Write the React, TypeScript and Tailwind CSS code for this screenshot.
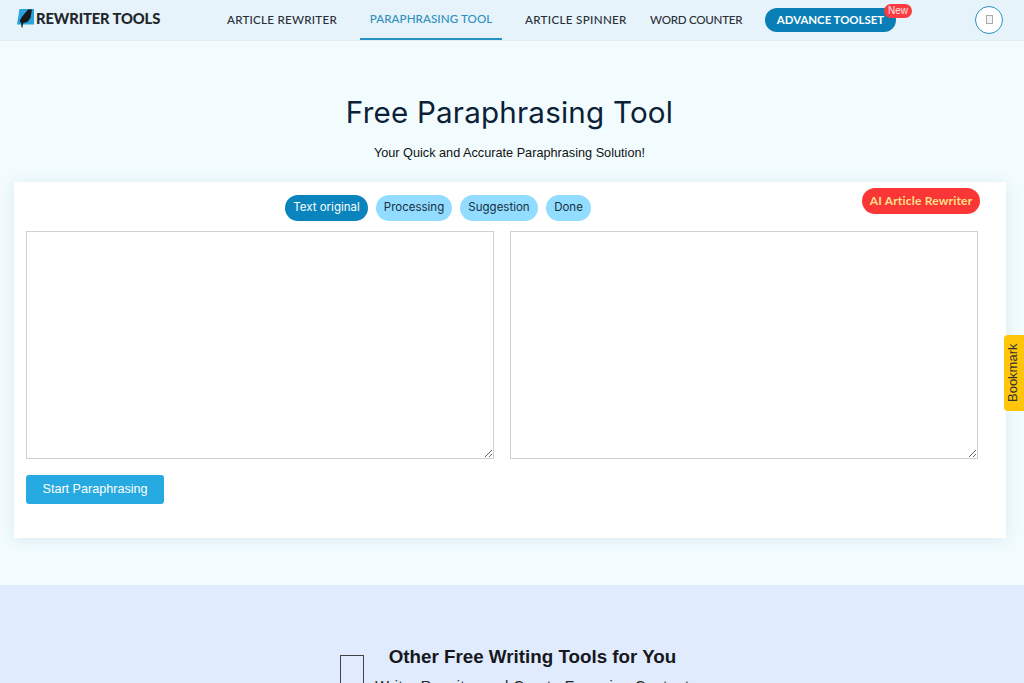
export default function App() {
  const nav = "font-['Lato',sans-serif] text-[11.6px] font-medium text-[#2a2f38] whitespace-nowrap";
  const poppins = "font-['Inter',sans-serif]";
  return (
    <div className="relative h-[683px] w-[1024px] overflow-hidden bg-[#f2fcff] font-['Liberation_Sans',sans-serif]">
      <header className="flex h-[41px] items-stretch border-b border-[#e2eef4] bg-[#e6f3fa]">
        <div className="ml-[17px] flex w-[210px] items-center gap-[1px] pb-[4px]">
          <svg width="18" height="20" viewBox="0 0 18 20" className="shrink-0">
            <path d="M2.5 1H17V16.5H0Z" fill="#29a5dd" />
            <path d="M11 1.5H15L13.5 10L10.5 14L8 14.5L6 15.5L5.5 19.5L4.5 19.5L4.2 15L2.5 13L5.5 8Z" fill="#17191c" />
          </svg>
          <span className="font-['Lato',sans-serif] text-[14.7px] font-black leading-none tracking-[-0.1px] text-[#22262b] whitespace-nowrap">REWRITER TOOLS</span>
        </div>
        <div className="flex w-[133px] items-center pb-[1px]"><span className={nav + " tracking-[0.25px]"}>ARTICLE REWRITER</span></div>
        <div className="flex w-[142px] items-center justify-center border-b-2 border-[#2492c5]">
          <span className={nav + " tracking-[0.08px] !text-[#2f8fbd]"}>PARAPHRASING TOOL</span>
        </div>
        <div className="ml-[23px] flex w-[125px] items-center pb-[1px]"><span className={nav + " tracking-[0.33px]"}>ARTICLE SPINNER</span></div>
        <div className="flex w-[115px] items-center pb-[1px]"><span className={nav + " tracking-[-0.27px]"}>WORD COUNTER</span></div>
        <div className="flex items-center pb-[1px]">
          <div className="relative flex h-[24px] w-[131px] items-center justify-center rounded-full bg-[#0a7fb7]">
            <span className="font-['Lato',sans-serif] text-[11.4px] font-bold tracking-[0px] text-white whitespace-nowrap">ADVANCE TOOLSET</span>
            <span className="absolute right-[-16px] top-[-4px] flex h-[14px] w-[28px] items-center justify-center rounded-full bg-[#fb3a41] text-[10px] leading-none text-[#ffe5e5]">New</span>
          </div>
        </div>
        <div className="ml-[79px] flex items-center pb-[1px]">
          <div className="flex h-[28px] w-[28px] items-center justify-center rounded-full border border-[#2a8fc0] bg-white">
            <span className="h-[9px] w-[7px] border border-[#aaaaaa] bg-[#f4f4f4]" />
          </div>
        </div>
      </header>

      <main className="flex h-[544px] flex-col">
        <h1 className={poppins + " mt-[53px] pr-[5px] text-center text-[29.6px] font-normal leading-[36px] tracking-[0.2px] text-[#0b2136]"}>Free Paraphrasing Tool</h1>
        <p className="mt-[15px] pr-[5px] text-center text-[12.7px] leading-[16px] text-[#111]">Your Quick and Accurate Paraphrasing Solution!</p>
        <section className="relative ml-[14px] mt-[21px] h-[356px] w-[992px] bg-white px-[12px] pt-[13px] shadow-[0_2px_14px_rgba(60,100,130,0.12)]">
          <div className={poppins + " ml-[259px] flex gap-[8px] text-[11.5px] leading-none"}>
            <span className="flex h-[26px] w-[83px] items-center justify-center rounded-full bg-[#0a84bd] text-white">Text original</span>
            <span className="flex h-[26px] w-[76px] items-center justify-center rounded-full bg-[#92dcff] text-[#163040]">Processing</span>
            <span className="flex h-[26px] w-[78px] items-center justify-center rounded-full bg-[#92dcff] text-[#163040]">Suggestion</span>
            <span className="flex h-[26px] w-[45px] items-center justify-center rounded-full bg-[#92dcff] text-[#163040]">Done</span>
          </div>
          <a className="absolute right-[26px] top-[6px] flex h-[26px] w-[118px] items-center justify-center rounded-full bg-[#fb3636] font-['Lato',sans-serif] text-[12px] font-bold tracking-[0.2px] text-[#ffe08a]">AI Article Rewriter</a>
          <div className="mt-[10px] flex gap-[16px]">
            <textarea className="h-[228px] w-[468px] border border-[#d0d0d0] bg-white" />
            <textarea className="h-[228px] w-[468px] border border-[#d0d0d0] bg-white" />
          </div>
          <button className="mt-[16px] flex h-[29px] w-[138px] items-center justify-center rounded-[3px] bg-[#27a9e1] text-[12.6px] text-white">Start Paraphrasing</button>
        </section>
      </main>

      <section className="flex h-[98px] justify-center gap-[11px] bg-[#e0ebfd] pl-[6px] pt-[60px]">
        <span className="mt-[10px] h-[40px] w-[24px] border border-[#444]" />
        <div className="flex flex-col items-center">
          <h2 className="text-[18.8px] font-bold leading-[24px] text-[#16181d]">Other Free Writing Tools for You</h2>
          <p className="mt-[8px] text-[14.5px] leading-[18px] tracking-[0.55px] text-[#222] whitespace-nowrap">Write, Rewrite, and Create Engaging Content</p>
        </div>
      </section>

      <div className="absolute left-[1004px] top-[335px] flex h-[76px] w-[20px] items-center justify-center rounded-l-[4px] bg-[#ffc609] pr-[3px]">
        <span className="rotate-[-90deg] text-[13px] text-[#333] whitespace-nowrap">Bookmark</span>
      </div>
    </div>
  );
}
